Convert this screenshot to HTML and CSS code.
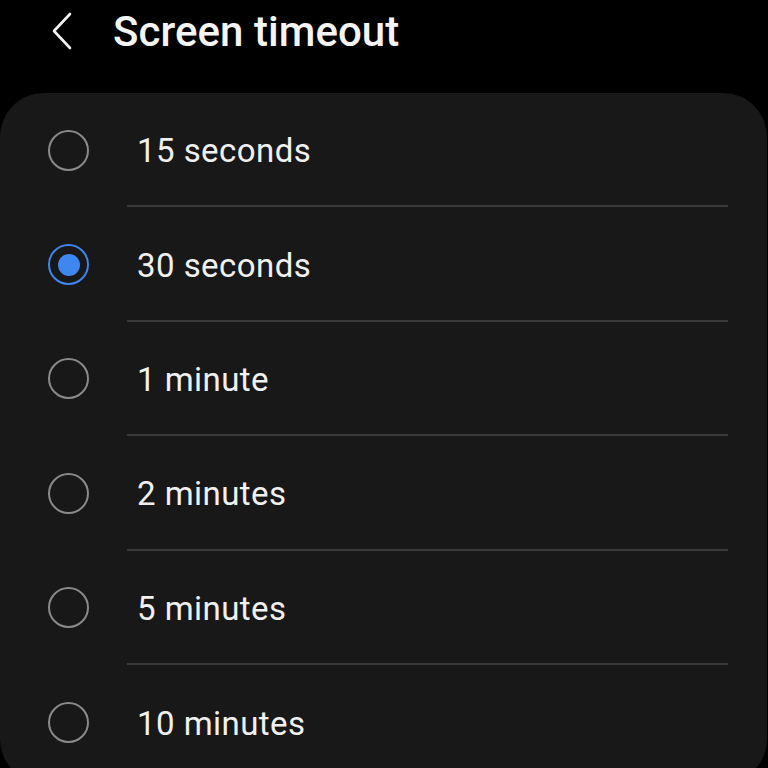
FILE: index.html
```html
<!DOCTYPE html>
<html>
<head>
<meta charset="utf-8">
<link rel="stylesheet" href="styles.css">
</head>
<body>
<div class="header">
  <svg class="back" width="24" height="38" viewBox="0 0 24 38"><path d="M20 2 L4 19 L20 36" fill="none" stroke="#f2f2f2" stroke-width="2.6" stroke-linecap="round" stroke-linejoin="round"/></svg>
  <h1 class="title">Screen timeout</h1>
</div>
<div class="card">
  <div class="row"><span class="radio"></span><div class="label">15 seconds</div></div>
  <div class="row"><span class="radio on"></span><div class="label">30 seconds</div></div>
  <div class="row"><span class="radio"></span><div class="label">1 minute</div></div>
  <div class="row"><span class="radio"></span><div class="label">2 minutes</div></div>
  <div class="row"><span class="radio"></span><div class="label">5 minutes</div></div>
  <div class="row last"><span class="radio"></span><div class="label">10 minutes</div></div>
</div>
</body>
</html>
```
FILE: styles.css
```css
html, body {
  margin: 0;
  padding: 0;
  background: #000;
  height: 768px;
  overflow: hidden;
  font-family: Roboto, "Noto Sans", sans-serif;
}
.header {
  height: 93px;
  display: flex;
  align-items: flex-start;
  padding-left: 50px;
  box-sizing: border-box;
  padding-top: 11px;
}
.back {
  margin-top: 1px;
  margin-right: 39px;
}
.title {
  margin: 0;
  font-size: 42px;
  font-weight: 500;
  color: #f4f4f4;
  line-height: 42px;
  letter-spacing: 0.05px;
}
.card {
  background: #181818;
  border-radius: 44px;
  margin: 0 1px 0 0;
  height: 690px;
}
.row {
  display: flex;
  align-items: stretch;
  height: 114.4px;
  padding-left: 48px;
  box-sizing: border-box;
}
.radio {
  flex: none;
  align-self: center;
  width: 41px;
  height: 41px;
  box-sizing: border-box;
  border: 2px solid #8a8a8a;
  border-radius: 50%;
  margin-right: 38px;
  position: relative;
}
.radio.on {
  border-color: #3e86f0;
}
.radio.on::after {
  content: "";
  position: absolute;
  left: 7.5px;
  top: 7.5px;
  width: 22px;
  height: 22px;
  border-radius: 50%;
  background: #3e86f0;
}
.label {
  flex: 1;
  display: flex;
  align-items: center;
  padding-left: 10px;
  padding-top: 3px;
  margin-right: 39px;
  border-bottom: 2px solid #393939;
  color: #f0f0f0;
  font-size: 33px;
  letter-spacing: 0.45px;
}
.row.last .label {
  border-bottom: none;
}
```
